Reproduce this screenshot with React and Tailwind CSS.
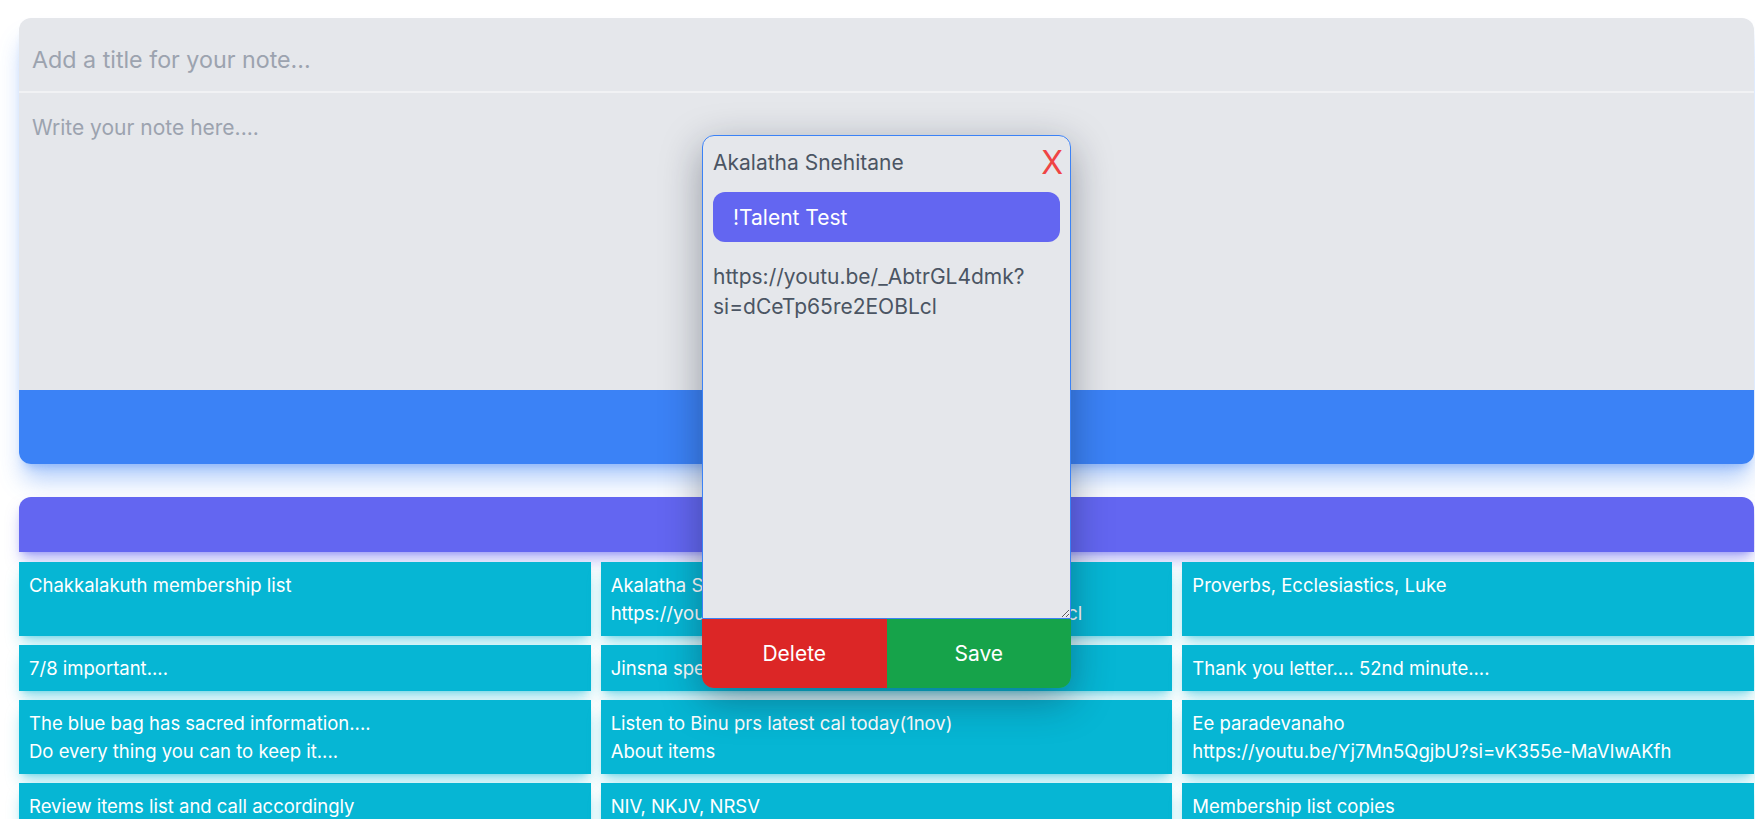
import React from 'react';

const notes = [
  { text: 'Chakkalakuth membership list' },
  { text: 'Akalatha Snehitane\nhttps://youtu.be/_AbtrGL4dmk?si=dCeTp65re2EOBLcl' },
  { text: 'Proverbs, Ecclesiastics, Luke' },
  { text: '7/8 important....' },
  { text: 'Jinsna speech notes' },
  { text: 'Thank you letter.... 52nd minute....' },
  { text: 'The blue bag has sacred information....\nDo every thing you can to keep it....' },
  { text: 'Listen to Binu prs latest cal today(1nov)\nAbout items' },
  { text: 'Ee paradevanaho\nhttps://youtu.be/Yj7Mn5QgjbU?si=vK355e-MaVIwAKfh' },
  { text: 'Review items list and call accordingly' },
  { text: 'NIV, NKJV, NRSV' },
  { text: 'Membership list copies' },
];

const NoteModal = () => {
  return (
    <div className="absolute left-[702px] top-[135px] w-[369px] rounded-xl shadow-[0_12px_40px_rgba(15,23,42,0.38)]">
      <div className="flex h-[484px] flex-col rounded-t-xl border border-[#3b82f6] bg-[#e5e7eb]">
        <div className="flex items-center justify-between pl-2.5 pr-[7px] pt-[9px]">
          <span className="text-[21px] leading-7 text-[#4b5563]">Akalatha Snehitane</span>
          <button className="text-[32px] leading-9 text-[#ef4444]">X</button>
        </div>
        <input
          className="mx-2.5 mt-[11px] h-[50px] rounded-xl bg-[#6366f1] px-5 text-[21px] text-white outline-none"
          defaultValue="!Talent Test"
        />
        <textarea
          className="mt-2.5 w-full flex-1 bg-transparent px-2.5 pt-2.5 text-[21px] leading-[30px] text-[#4b5563] outline-none"
          defaultValue="https://youtu.be/_AbtrGL4dmk?si=dCeTp65re2EOBLcl"
        />
      </div>
      <div className="flex h-[69px] overflow-hidden rounded-b-xl text-[21px] text-white">
        <button className="flex-1 bg-[#dc2626]">Delete</button>
        <button className="flex-1 bg-[#16a34a]">Save</button>
      </div>
    </div>
  );
};

const App = () => {
  return (
    <div className="relative min-h-screen overflow-hidden bg-white font-['Inter',sans-serif]">
      <div className="ml-[19px] w-[1735px] pt-[18px]">
        <div className="overflow-hidden rounded-xl shadow-xl shadow-[#3b82f6]/40">
          <input
            className="block h-[75px] w-full border-b-2 border-[#f1f2f4] bg-[#e5e7eb] px-[13px] pt-[10px] text-[23.25px] outline-none placeholder:text-[#9ca3af]"
            placeholder="Add a title for your note..."
          />
          <textarea
            className="block h-[297px] w-full resize-none bg-[#e5e7eb] px-[13px] pt-[19px] text-[21px] outline-none placeholder:text-[#9ca3af]"
            placeholder="Write your note here...."
          />
          <button className="block h-[74px] w-full bg-[#3b82f6]"></button>
        </div>

        <div className="mt-[33px] h-[55px] rounded-t-xl bg-[#6366f1] shadow-lg shadow-[#6366f1]/50"></div>

        <div className="mt-[10px] grid grid-cols-3 gap-x-[10px] gap-y-[9px]">
          {notes.map((note, index) => (
            <div
              key={index}
              className="whitespace-pre-line bg-[#06b6d4] px-2.5 py-[9px] text-[18.5px] leading-7 text-white shadow-lg shadow-[#06b6d4]/40"
            >
              {note.text}
            </div>
          ))}
        </div>
      </div>
      <NoteModal />
    </div>
  );
};

export default App;
